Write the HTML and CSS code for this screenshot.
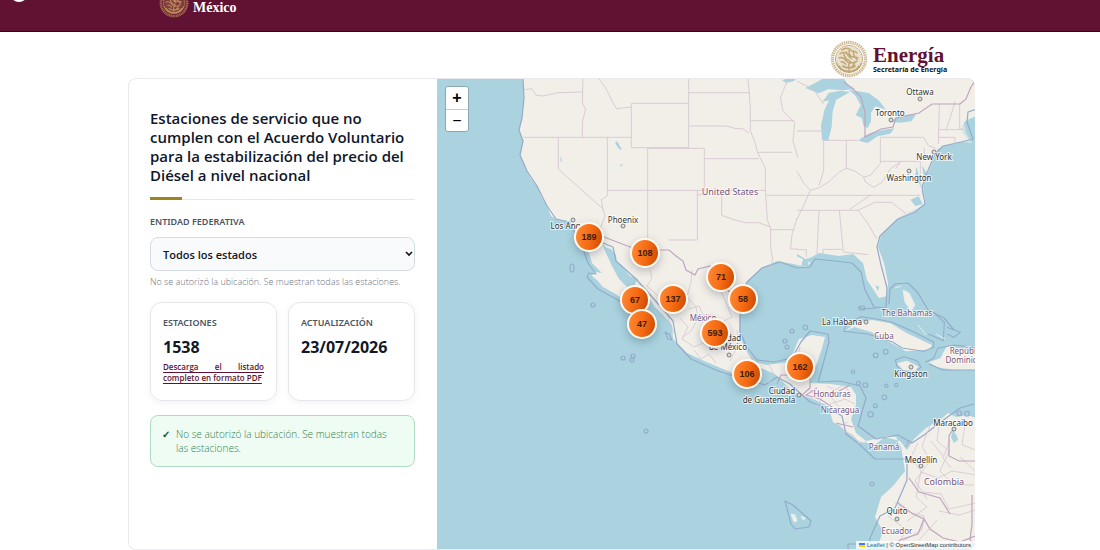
FILE: index.html
```html
<!DOCTYPE html>
<html lang="es">
<head>
<meta charset="utf-8">
<meta name="viewport" content="width=device-width, initial-scale=1">
<title>Estaciones de servicio | Secretaría de Energía</title>
<link rel="stylesheet" href="styles.css">
</head>
<body>
<svg class="defs" aria-hidden="true">
  <symbol id="seal" viewBox="0 0 40 40">
    <g fill="none" stroke="currentColor">
      <circle cx="20" cy="20" r="17.4" stroke-width="3.6" stroke-dasharray="1.6 .7" opacity=".75"/>
      <circle cx="20" cy="20" r="14.3" stroke-width="1"/>
      <circle cx="20" cy="20" r="13.5" fill="currentColor" fill-opacity=".35" stroke="none"/>
      <path stroke-width="1.5" d="M12 11c3-3 8-3 10 0 2 2 5 0 7 3M10 15c3-3 7-2 10 1s7 1 10 3M9 19c4-2 6 0 8 3s7 3 12 0M11 23c3-1 4 1 6 3M21 9c-2 4-1 6 2 9M25 11c-1 4 0 7 4 10M14 13c1 5 3 8 7 9M17 12c1 4 3 6 6 8M22 22c-2 2-3 4-2 6M26 23c0 2-1 4-3 5"/>
      <path stroke-width="2" d="M9 27c3 5 7 6 11 6s8-1 11-6M13 27c4 3 10 3 14 0"/>
      <path stroke-width="1.2" d="M7 24c1 4 3 6 5 8M33 24c-1 4-3 6-5 8M20 28v6"/>
    </g>
  </symbol>
</svg>

<header class="topbar">
  <span class="topbar-dot"></span>
  <a class="gob" href="#">
    <svg class="gob-seal" aria-hidden="true"><use href="#seal"/></svg>
    <span class="gob-text"><small>Gobierno de</small><strong>México</strong></span>
  </a>
</header>

<main class="page">
  <div class="brand">
    <svg class="brand-seal" aria-hidden="true"><use href="#seal"/></svg>
    <div class="brand-text"><strong>Energía</strong><span>Secretaría de Energía</span></div>
  </div>

  <div class="card">
    <section class="panel">
      <h1>Estaciones de servicio que no cumplen con el Acuerdo Voluntario para la estabilización del precio del Diésel a nivel nacional</h1>
      <div class="rule"></div>
      <label class="caption" for="state">Entidad federativa</label>
      <div class="select-box">
        <select id="state"><option>Todos los estados</option></select>
        <svg viewBox="0 0 8 6" aria-hidden="true"><path d="M1 1l3 3 3-3" fill="none" stroke="#111" stroke-width="1.6"/></svg>
      </div>
      <p class="hint">No se autorizó la ubicación. Se muestran todas las estaciones.</p>
      <div class="stats">
        <div class="stat">
          <span class="caption">Estaciones</span>
          <strong>1538</strong>
          <a href="#">Descarga el listado completo en formato PDF</a>
        </div>
        <div class="stat">
          <span class="caption">Actualización</span>
          <strong>23/07/2026</strong>
        </div>
      </div>
      <div class="notice" role="status"><span class="check">✓</span><span>No se autorizó la ubicación. Se muestran todas las estaciones.</span></div>
    </section>

    <section class="map" aria-label="Mapa de estaciones">
      <svg class="tiles" viewBox="437 79 538 471" preserveAspectRatio="xMinYMin slice">
        <g class="land">
          <path d="M522 70l2 28-2 20-3 12 4 11-3 14 7 16 4 8 6 7 5 12 5 8 4 10 7 4 12 1 5 9 9 14 5 9 3 10 5 5 5 5-7-1-3 4 5 4 6 7 11 6 13 9 5 12 4 10 9 4 5-3-5-14-7-12-11-12-8-8-7-13-5-11-3-8 7 2 5 6 1 11 9 11 14 12 9 9 6 9 10 10 7 8 1 14 14 14 17 8 24 10 18 6 15-9 14 6 18 18 20 7 15 7 5 16 13 9 14 11 16 2 10-8 10 1 5 10 4 24-12 15-12 11-6 20 8 14-4 12H990V420l-17-3-5-2-12 2-8-4-7 6-15 9-12 11-7 11-7-9-16-4-18 4-10-8-5-14 5-14 0-10-5-8-20-3-21-1 3-11 4-9 5-15 3-11-13-2-13 4-4 9-6 14-22 3-14-3-9-15-5-13 1-24 1-14 5-13 16-15 15-7 16 3 13 3 4-3 0-6 9-5 20 3 14-2 10 9 4 17 12 18 8-2 1-13-4-20-6-16 3-11 18-17 17-7 10-8-3-17 4-12 9-21 8-8 18-4 10 1-6-10-2-11 14-7V70Z"/>
          <g transform="translate(797 314) scale(.33333)">
            <path d="M145 52l35-28 45-6 55 10 50 30 75 35-8 14-70 5-35-20-70-38-50-15ZM300 148l30-8 35 18-12 12-35-2ZM395 145l35-12 20-38 35 8 70 20v45h-80l-55-8ZM300 0l30 2-10 5ZM375 30l20 15M450 60l25 15"/>
          </g>
        </g>

        <g class="water" transform="translate(797 78) scale(.33333)">
          <path d="M75 187l-3-45 10-45 14-30-20 5 20-28 35-6 28 4-42 24-10 35-3 45-10 42ZM25 30l35-18 20-12h60l12 20 22 12-35 5-45-3-30 12ZM155 35l60 10 30 22 22 28-32-10-13 20 0 25-10 20-12-5-6-25-18-8 15-30-15-28ZM188 183l32-18 40-10 32-4-12 16-38 8-30 20-22-5ZM285 132l10-14 35-8 28-2-15 22-35 4ZM0 535l18 8-5 20 25 5-5-15 18-5-5-10-20 5-26-15ZM340 365l25-10 12 24-22 5ZM358 265l10 35 5 30-18-35ZM375 262l18 30-12 12ZM235 622l12 5-5 12ZM420 213l65-12 15-5-75 25Z"/>
          <path d="M545 118l-35 5-15 20 2 20 8 14 12 8-25 10-55 10-20 20-15 40-18 30-7 25-4 25 8 18 0 17-80 40-60 60h310Z" opacity=".4"/>
        </g>
        <g class="water">
          <path d="M617 141l5 9-3-1-4-6ZM560 156l2 4-1 3ZM555 137l2 2M541 130l2 3M620 167l3-2-2-1ZM953 430l4 6 1 4-4 3-3-6ZM782 80l8-2h7l-3 3-8 2ZM837 423l7 7-2 2-7-7ZM602 244l8 7 4 10 6 3 10 12 8 3-5 8-10-8-7-9-9-15Z"/>
        </g>

        <g class="shore">
          <path d="M523 78l1 20-2 20-3 12 4 11-3 14 7 16 10 15 10 20 9 13 13 3 5 9 9 18 5 14 8 11-7-1-2 4 11 12 25 14 8 14 8 15M603 243l10 4 3 14 20 18 17 19 20 23 4 23 14 15 27 12 28 9 19 5 12-8 13 7 20 18 20 7 12 7 4 18 13 10 16 15 32 0 0 21-12 28-15 8-10 22-2 32M742 314v-19l5-13 15-14 18-6 17 6 13-1 5-8 20 2 17 2 9 9 4 18 9 17 12 1 1-20-6-23-4-18 3-11 18-17 17-7 10-8-3-17 4-12 9-21 8-8 18-4 12-3-6-17 1-10 12-4M740 314v17l6 15 11 14 17 2 18-4 9-16 9-11 18 3 1 8-7 26-4 14 22-1 20 5 6 12-8 28 18 13 22-4 14 8 12-8 14-11 22-16 14-4"/>
        </g>
        <g class="shore" transform="translate(797 314) scale(.33333)">
          <path d="M140 52l8-22 45-22 50 8 40 8 55 24 72 36 0 16-30 12-65-10-28-18-75-24ZM295 138l25-10 40 12 12 20-20 16-32-4-20-15ZM385 145l25-12 12-30 50-10 70 8M397 150l40 18 98 0M278 708v-18h-125v18M410-5l32 30-3 55-45-20M450 40l40 15-20 15-20-10"/>
          <circle cx="25" cy="40" r="7"/><circle cx="236" cy="124" r="7"/><circle cx="266" cy="113" r="7"/><circle cx="168" cy="173" r="5"/><circle cx="268" cy="215" r="5"/><circle cx="298" cy="213" r="5"/><circle cx="262" cy="250" r="7"/><circle cx="235" cy="275" r="6"/><circle cx="221" cy="301" r="8"/><circle cx="225" cy="509" r="6"/><circle cx="487" cy="298" r="7"/><circle cx="510" cy="299" r="7"/><circle cx="205" cy="213" r="7"/><circle cx="184" cy="208" r="6"/>
        </g>
        <g class="shore">
          <path d="M785 501l8 4 18 16-2 6-14 2-4-5ZM889 304l1-15 5-5 13-1 10 10 10 17 16 8 10 12M858 307l6 2 12-1M665 332l4 2 3 6-4-1Z"/>
          <ellipse cx="572" cy="268" rx="2" ry="4"/><circle cx="593" cy="305" r="2"/><circle cx="623" cy="358" r="2"/><circle cx="633" cy="356" r="2"/><circle cx="632" cy="360" r="2"/><circle cx="646" cy="431" r="2"/><circle cx="792" cy="331" r="2"/><circle cx="785" cy="341" r="2"/><circle cx="787" cy="347" r="2"/><ellipse cx="862" cy="308" rx="3" ry="2"/>
        </g>
        <path class="sand" d="M791 514l3 8 3-1-2-6ZM895 288l6-2M903 290l6 3 6 12-4 6-6-9ZM801 516l2 4 3-2M918 325l8 10M936 334l9 5"/>

        <g class="states" transform="translate(437 78) scale(.33333)">
          <path d="M262 35l22-3 14 20 20 2 45-10 75-2M438 0l-2 75 10 20-10 35v48M260 178h280M364 178v95l134 120M511 178v175l-18 12 5 28 6 22-14 35 10 22M513 337h27M484 0l22 30 20 40 14 25"/>
        </g>
        <g class="states" transform="translate(617 78) scale(.33333)">
          <path d="M0 92l43-5M215 0v210M215 44h182M43 76h171M43 76v133h172M0 178h42M217 144h112l28 8h20l20 14M92 211v270M92 211h170v126M262 242h163M0 337h445M241 337v149h-86M241 350h73v62l40 14 30 8 40 0 36 12M392 0l5 44 3 50 0 64 15 38 6 26 24 48 0 65 6 90 10 28v55l6 36-8 30M401 128h130M420 223h105M448 352h95M460 455h70M510 10l-20 50 8 38 35 36-5 55 15 50M540 420l-15 50-4 43h20"/>
        </g>
        <g class="states" transform="translate(797 78) scale(.33333)">
          <path d="M0 159h78M80 187h108M148 187v84l-20 10-30 28-30 20-28 8-20 45-20 42M80 187v90l-14 46M0 280l20 35 20 22M148 271l25 8 27 18 20-5 30-35v-78M200 297l5 15 25 16 25-15 25-40 30-22M250 250h118M370 250v38M250 178h130l14 25 22 8M382 240l0-30M0 352h370M0 397h183l50-24h50l44 34M183 397l30 40 26 46M157 395l65-45M66 397l-6 130M127 397l12 125 75 8M78 514h57M78 514v22M0 515h28v22M427 78l-3 120M448 155l16-50 10-35M488 75v78l12 0M427 155h70M424 178h50l0 20M0 10l50 24 30 45M310 252l-14 20"/>
        </g>
        <g class="states">
          <path d="M650 270l2 8-5 8 11 10 7 10 4 15 5 12M692 270l-1 12-4 15 9 10 2 12-7 12-8 6M711 271l8 16 8 18 5 12-12 6-9 9M680 318l8 9-6 12 12 8 9-4 10 7 7-12M689 309l10-3 4 9 10 0 7 8M694 350l7 9 8-5 7 9M720 340l9 7 10-4 8 8M737 330l2 13-9 18M748 353l8 10 8 14M767 362l6 10-4 11M800 347l-3 12 17 7"/>
          <path d="M827 386l8 4 9-5 8 11M809 390l10 7 12 0 8 10M823 396l-8 14M830 404l15-5 10 5M848 422l-11 5M841 430l12 5 6 9M865 441l5 8M885 441l-4 11"/>
          <path d="M930 426l-8 20 8 15-15 20 12 18M939 424l-2 17 12 10-9 20 14 14 20 0M950 440l-7 18 8 10M965 425l-3 20 14 5M960 457l16 15M918 443l-7 14 10 14-5 26 11 10-20 14M921 472l17 6 14-7 24 4M923 492l18 2 8 15 27-6M939 511l20 4 17-5M895 503l16 10 13 3-2 14-21 12M888 516l19 14-10 15M937 520l-18 20M931 441l12 15"/>
        </g>
        <g class="borders">
          <path d="M589 236l15 1 34 13h31l7 6 7 5 3 9 9 5 3-6 12-3 5 5 6 4 6 15 9 5M844 82l9 7 8 8 4 15v25l16-8 12-2 3-9 23-5 13-9h28l6-5 5-12 5-8M777 384l4-9 14 0M794 378h16v10l-8 7M817 388l-11 7 14 4 12 8M832 395l18-10M841 410l12 2M836 423l17 4M905 447l5-7M957 423l-8 13 0 20 10 5 17 0M909 478l10 14 21 6 10 16M898 503l15 11 11 5 6 10 13 9 17 4 15-6M972 495v30l-2 14 5 8M924 519l-6 15-18 6-9 10"/>
        </g>

        <g class="dots">
          <circle cx="573" cy="220" r="2"/><circle cx="623" cy="226" r="2"/><circle cx="920" cy="99" r="2"/><circle cx="891" cy="120" r="2"/><circle cx="934" cy="152" r="2"/><circle cx="909" cy="171" r="2"/><circle cx="866" cy="322" r="2"/><circle cx="911" cy="367" r="2"/><circle cx="729" cy="355" r="2"/><circle cx="799" cy="395" r="2"/><circle cx="954" cy="429" r="2"/><circle cx="921" cy="466" r="2"/><circle cx="897" cy="519" r="2"/>
        </g>
        <g class="cities">
          <text x="573" y="229">Los Angeles</text><text x="623" y="223">Phoenix</text><text x="920" y="95">Ottawa</text><text x="890" y="116">Toronto</text><text x="934" y="160">New York</text><text x="909" y="181">Washington</text><text x="842" y="325">La Habana</text><text x="911" y="377">Kingston</text><text x="728" y="341">Ciudad</text><text x="728" y="350">de México</text><text x="782" y="394">Ciudad</text><text x="769" y="403">de Guatemala</text><text x="953" y="426">Maracaibo</text><text x="921" y="463">Medellín</text><text x="897" y="514">Quito</text>
        </g>
        <g class="countries">
          <text class="large" x="730" y="195">United States</text><text x="703" y="321">México</text><text x="907" y="316">The Bahamas</text><text x="884" y="339">Cuba</text><text x="968" y="354">República</text><text x="968" y="363">Dominicana</text><text x="832" y="397">Honduras</text><text x="840" y="413">Nicaragua</text><text x="884" y="450">Panamá</text><text class="large" x="944" y="485">Colombia</text><text x="897" y="534">Ecuador</text>
        </g>
      </svg>

      <div class="zoom"><button type="button" aria-label="Acercar">+</button><button type="button" aria-label="Alejar">−</button></div>

      <button type="button" class="pin california">189</button>
      <button type="button" class="pin sonora">108</button>
      <button type="button" class="pin coahuila">71</button>
      <button type="button" class="pin tamaulipas">58</button>
      <button type="button" class="pin baja">67</button>
      <button type="button" class="pin durango">137</button>
      <button type="button" class="pin cabos">47</button>
      <button type="button" class="pin centro">593</button>
      <button type="button" class="pin oaxaca">106</button>
      <button type="button" class="pin yucatan">162</button>

      <div class="attribution">
        <svg viewBox="0 0 12 8" aria-hidden="true"><path fill="#4c7be1" d="M0 0h12v4H0z"/><path fill="#ffd500" d="M0 4h12v4H0z"/></svg>
        <a href="#">Leaflet</a> | © OpenStreetMap contributors
      </div>
    </section>
  </div>
</main>
</body>
</html>
```

FILE: styles.css
```css
* { box-sizing: border-box; }

body {
  margin: 0;
  background: #fff;
  color: #111827;
  font-family: "Open Sans", "Noto Sans", sans-serif;
}

.defs { position: absolute; width: 0; height: 0; }

/* Top bar */
.topbar {
  display: flex;
  align-items: flex-end;
  height: 32px;
  padding: 0 10px;
  overflow: hidden;
  background: #611232;
  border-bottom: 1px solid #34061a;
}
.topbar-dot {
  width: 18px;
  height: 18px;
  margin-bottom: 29px;
  flex: none;
  border-radius: 50%;
  background: #fff;
}
.gob {
  display: flex;
  align-items: flex-end;
  gap: 4px;
  margin: 0 0 13px 131px;
  color: #fff;
  text-decoration: none;
}
.gob-seal { width: 30px; height: 30px; color: #b98b56; }
.gob-text {
  display: flex;
  flex-direction: column;
  padding-bottom: 3px;
  font-family: "Liberation Serif", serif;
}
.gob-text small { font-size: 9px; font-weight: 700; line-height: 8px; }
.gob-text strong { font-size: 14px; line-height: 14px; }

/* Page */
.page { padding: 0 125px 0 128px; }
.brand {
  display: flex;
  justify-content: flex-end;
  align-items: center;
  gap: 5px;
  height: 46px;
  padding: 8px 24px 0 0;
}
.brand-seal { width: 38px; height: 38px; color: #bfa673; }
.brand-text { display: flex; flex-direction: column; min-width: 78px; }
.brand-text strong {
  color: #611232;
  font: bold 21px/22px "Liberation Serif", serif;
}
.brand-text span {
  color: #111;
  font: bold 7px/8px "Noto Sans", sans-serif;
}

.card {
  display: grid;
  grid-template-columns: 308px 1fr;
  min-height: calc(100vh - 78px);
  overflow: hidden;
  border: 1px solid #e8eaed;
  border-right: 0;
  border-radius: 8px;
}

/* Side panel */
.panel { padding: 30px 22px 24px 21px; }
h1 {
  margin: 0;
  color: #0f172a;
  font-size: 15px;
  font-weight: 600;
  line-height: 19px;
}
.rule {
  height: 3px;
  margin: 12px 0 16px;
  background: linear-gradient(#9c8420, #9c8420) left / 32px 3px no-repeat,
    linear-gradient(#e5e7eb, #e5e7eb) bottom / 100% 1px no-repeat;
}
.caption {
  display: block;
  color: #4b5563;
  font: 600 9px/12px "Noto Sans", sans-serif;
  text-transform: uppercase;
}
.select-box { position: relative; margin: 9px 0 5px; }
.select-box svg {
  position: absolute;
  top: 14px;
  right: 2px;
  width: 8px;
  height: 6px;
  pointer-events: none;
}
select {
  display: block;
  width: 100%;
  height: 34px;
  padding: 0 12px;
  appearance: none;
  border: 1px solid #d5dbe3;
  border-radius: 8px;
  background: #f9fafc;
  color: #0f172a;
  font: 600 11px "Open Sans", sans-serif;
}
.hint {
  margin: 0 0 14px;
  color: #6b7280;
  font-size: 9px;
  font-weight: 300;
  line-height: 12px;
  white-space: nowrap;
}
.stats { display: grid; grid-template-columns: 1fr 1fr; gap: 11px; }
.stat {
  min-height: 99px;
  padding: 14px 12px;
  border: 1px solid #e5e7eb;
  border-radius: 12px;
  box-shadow: 0 2px 8px rgba(15, 23, 42, 0.05);
}
.stat strong {
  display: block;
  margin: 6px 0 2px;
  font-size: 16px;
  font-weight: 700;
  line-height: 24px;
}
.stat a {
  display: block;
  color: #611232;
  font-size: 8px;
  font-weight: 600;
  line-height: 11px;
  text-align: justify;
  text-underline-offset: 2px;
}
.notice {
  display: flex;
  gap: 6px;
  margin-top: 14px;
  padding: 11px 20px 11px 11px;
  border: 1px solid #aedcc3;
  border-radius: 8px;
  background: #effcf4;
  color: #2f8050;
  font-size: 10px;
  font-weight: 300;
  line-height: 14px;
}
.check { color: #14532d; font-weight: 600; }

/* Map */
.map {
  position: relative;
  overflow: hidden;
  background: #aad3df;
}
.tiles { position: absolute; width: 100%; height: 100%; }
.land { fill: #f2efe9; }
.water { fill: #aad3df; }
.sand { fill: #f2efe9; stroke: #e0eeee; stroke-width: 1; }
.shore { fill: none; stroke: #94abc9; stroke-width: 1.2; stroke-linejoin: round; }
.shore[transform] { stroke-width: 3.2; }
.states { fill: none; stroke: #d5c5d2; stroke-width: 0.8; }
.states[transform] { stroke-width: 2.6; }
.borders { fill: none; stroke: #bea5bf; stroke-width: 1.2; }
.dots { fill: #ddd; stroke: #666; stroke-width: 0.8; }
.cities,
.countries {
  font-family: "Noto Sans", sans-serif;
  font-size: 8px;
  text-anchor: middle;
  paint-order: stroke;
  stroke: rgba(255, 255, 255, 0.7);
  stroke-width: 2px;
}
.cities { fill: #333; }
.countries { fill: #78567e; }
.large { font-size: 9px; }

.zoom {
  position: absolute;
  top: 7px;
  left: 8px;
  display: flex;
  flex-direction: column;
  border: 1px solid #8ba7b1;
  border-radius: 3px;
  overflow: hidden;
}
.zoom button {
  width: 22px;
  height: 22px;
  padding: 0;
  border: 0;
  background: #fff;
  color: #000;
  font: bold 16px/20px "Liberation Sans", sans-serif;
}
.zoom button + button { border-top: 1px solid #ccc; font-weight: 400; }

.pin {
  position: absolute;
  width: 30px;
  height: 30px;
  padding: 0;
  border: 2px solid #fff8ef;
  border-radius: 50%;
  background: linear-gradient(100deg, #ff8a35, #f56a12 55%, #c94706);
  box-shadow: 0 3px 9px rgba(20, 40, 60, 0.28);
  color: #401c0d;
  font: bold 9px/12px "Liberation Sans", sans-serif;
}
.california { left: 137px; top: 143px; }
.sonora { left: 193px; top: 159px; }
.coahuila { left: 269px; top: 183px; }
.tamaulipas { left: 291px; top: 205px; }
.baja { left: 183px; top: 206px; }
.durango { left: 221px; top: 205px; }
.cabos { left: 190px; top: 230px; }
.centro { left: 263px; top: 239px; }
.oaxaca { left: 295px; top: 280px; }
.yucatan { left: 348px; top: 273px; }

.attribution {
  position: absolute;
  right: 0;
  bottom: 0;
  padding: 0 4px 0 3px;
  background: rgba(255, 255, 255, 0.8);
  color: #333;
  font: 6px/8px "Liberation Sans", sans-serif;
}
.attribution svg { width: 6px; height: 4px; }
.attribution a { color: #0078a8; text-decoration: none; }
```
